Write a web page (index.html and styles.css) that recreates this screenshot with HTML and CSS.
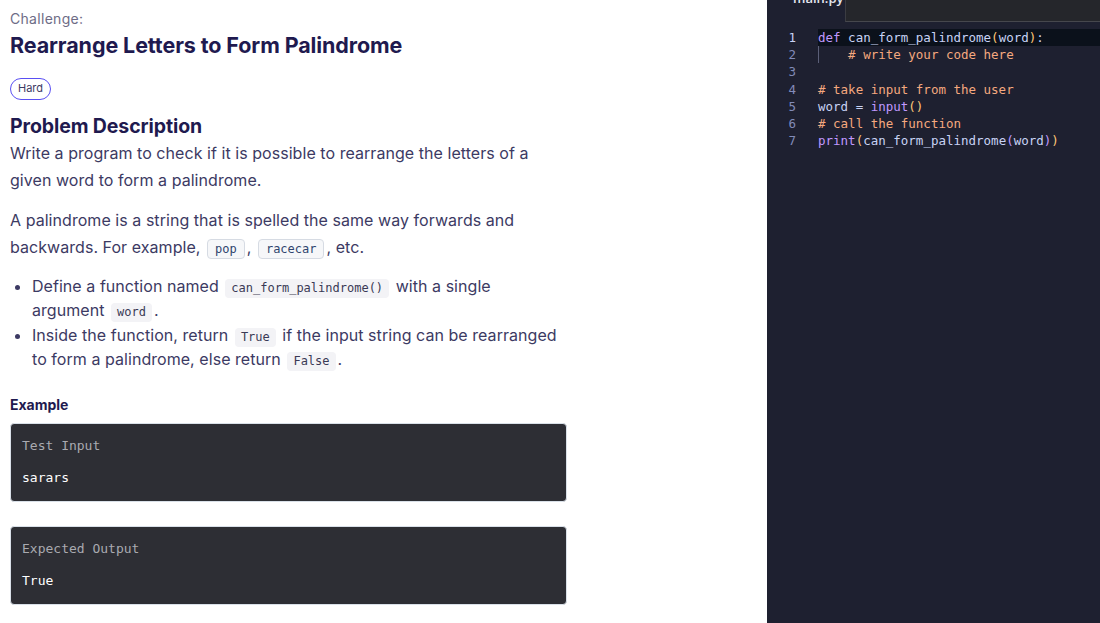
FILE: index.html
```html
<!DOCTYPE html>
<html>
<head>
<meta charset="utf-8">
<link rel="stylesheet" href="styles.css">
</head>
<body>
<div class="page">
  <section class="problem">
    <div class="kicker">Challenge:</div>
    <h1 class="title">Rearrange Letters to Form Palindrome</h1>
    <span class="badge">Hard</span>
    <h2 class="section-title">Problem Description</h2>
    <p class="para">Write a program to check if it is possible to rearrange the letters of a given word to form a palindrome.</p>
    <p class="para">A palindrome is a string that is spelled the same way forwards and backwards. For example, <code class="chip bordered">pop</code>, <code class="chip bordered">racecar</code>, etc.</p>
    <ul class="bullets">
      <li>Define a function named <code class="chip">can_form_palindrome()</code> with a single argument <code class="chip">word</code>.</li>
      <li>Inside the function, return <code class="chip">True</code> if the input string can be rearranged to form a palindrome, else return <code class="chip">False</code>.</li>
    </ul>
    <h3 class="example-title">Example</h3>
    <div class="io-box">
      <div class="io-label">Test Input</div>
      <div class="io-value">sarars</div>
    </div>
    <div class="io-box">
      <div class="io-label">Expected Output</div>
      <div class="io-value">True</div>
    </div>
  </section>
  <section class="editor">
    <div class="tabbar">
      <div class="tab">main.py</div>
      <div class="tab-rest"></div>
    </div>
    <div class="code">
      <div class="line active"><span class="ln">1</span><span class="src"><span class="kw">def</span> <span class="fn">can_form_palindrome</span><span class="pn">(</span>word<span class="pn">)</span>:</span></div>
      <div class="line"><span class="ln">2</span><span class="src"><span class="guide"></span>    <span class="cm"># write your code here</span></span></div>
      <div class="line"><span class="ln">3</span><span class="src"></span></div>
      <div class="line"><span class="ln">4</span><span class="src"><span class="cm"># take input from the user</span></span></div>
      <div class="line"><span class="ln">5</span><span class="src">word = <span class="kw">input</span><span class="pn">()</span></span></div>
      <div class="line"><span class="ln">6</span><span class="src"><span class="cm"># call the function</span></span></div>
      <div class="line"><span class="ln">7</span><span class="src"><span class="kw">print</span><span class="pn">(</span>can_form_palindrome<span class="pn2">(</span>word<span class="pn2">)</span><span class="pn">)</span></span></div>
    </div>
  </section>
</div>
</body>
</html>
```

FILE: styles.css
```css
* { box-sizing: border-box; }
html, body { margin: 0; padding: 0; height: 100%; overflow: hidden; }
body { font-family: Inter, "Open Sans", sans-serif; background: #fff; }

.page {
  display: flex;
  height: 623px;
}

.problem {
  width: 767px;
  padding: 10px 10px 0 10px;
  color: #3c3a63;
}

.kicker {
  font-size: 14px;
  color: #6e6c86;
  line-height: 18px;
  letter-spacing: 0.3px;
}

.title {
  margin: 3px 0 0;
  font-size: 21.5px;
  line-height: 28px;
  font-weight: 700;
  color: #1f1a4f;
  letter-spacing: -0.1px;
}

.badge {
  display: inline-block;
  margin-top: 19px;
  border: 1.5px solid #5a4ff3;
  border-radius: 12px;
  padding: 0 7px;
  height: 22px;
  line-height: 19px;
  font-size: 11px;
  color: #3c3a63;
  vertical-align: top;
}

.section-title {
  margin: 13px 0 0;
  font-size: 19.5px;
  line-height: 26px;
  font-weight: 700;
  color: #1f1a4f;
  letter-spacing: -0.1px;
}

.para {
  margin: 1px 0 13px;
  font-size: 16px;
  line-height: 27px;
  letter-spacing: 0.05px;
  width: 545px;
}

.chip {
  display: inline-block;
  font-family: "DejaVu Sans Mono", monospace;
  font-size: 12px;
  letter-spacing: 0;
  line-height: 18px;
  height: 19px;
  background: #f3f3f6;
  border-radius: 4px;
  padding: 0 6px;
  margin: 0 2px;
  color: #3a3a55;
}
.chip.bordered {
  border: 1px solid #d6dbe3;
  padding: 0 7px;
  height: 20px;
  background: #f6f7f9;
  color: #30456e;
}

.bullets {
  margin: 4px 0 0;
  padding-left: 22px;
  font-size: 16px;
  letter-spacing: 0.05px;
  line-height: 24.4px;
  width: 552px;
}

.example-title {
  margin: 24px 0 0;
  font-size: 14px;
  font-weight: 700;
  color: #1f1a4f;
  line-height: 18px;
}

.io-box {
  width: 557px;
  height: 79px;
  margin-top: 9px;
  background: #2d2e34;
  border: 1px solid #d9e0e8;
  border-radius: 4px;
  padding: 13px 11px;
  font-family: "DejaVu Sans Mono", monospace;
  font-size: 13px;
}
.io-box + .io-box { margin-top: 24px; }
.io-label { color: #a9aab0; line-height: 18px; }
.io-value { color: #ffffff; line-height: 18px; margin-top: 14px; }

.editor {
  flex: 1;
  background: #1e2030;
  display: flex;
  flex-direction: column;
}

.tabbar {
  display: flex;
  height: 22px;
}
.tab {
  width: 78px;
  color: #e6e8f0;
  font-size: 13px;
  font-family: "Open Sans", sans-serif;
  font-weight: 600;
  line-height: 12px;
  padding-left: 26px;
  margin-top: -8px;
  height: 30px;
}
.tab-rest {
  flex: 1;
  background: #25262b;
  border-left: 1px solid #3b3c42;
  border-bottom: 1px solid #46474d;
}

.code {
  margin-top: 7px;
  font-family: "DejaVu Sans Mono", monospace;
  font-size: 12.5px;
  color: #c8d3f5;
}
.line {
  display: flex;
  height: 17.2px;
  line-height: 17.2px;
}
.ln {
  width: 51px;
  text-align: right;
  padding-right: 22px;
  color: #828bb8;
  flex-shrink: 0;
}
.src { flex: 1; white-space: pre; position: relative; }
.line.active .src { background: #0b111b; }
.line.active .ln { color: #c8d3f5; }
.guide {
  position: absolute;
  left: 0;
  top: 0;
  bottom: 0;
  border-left: 1px solid #5b5f78;
}
.kw { color: #c099ff; }
.fn { color: #c8d3f5; }
.pn { color: #ffc777; }
.pn2 { color: #c099ff; }
.cm { color: #f5a97f; }
```
